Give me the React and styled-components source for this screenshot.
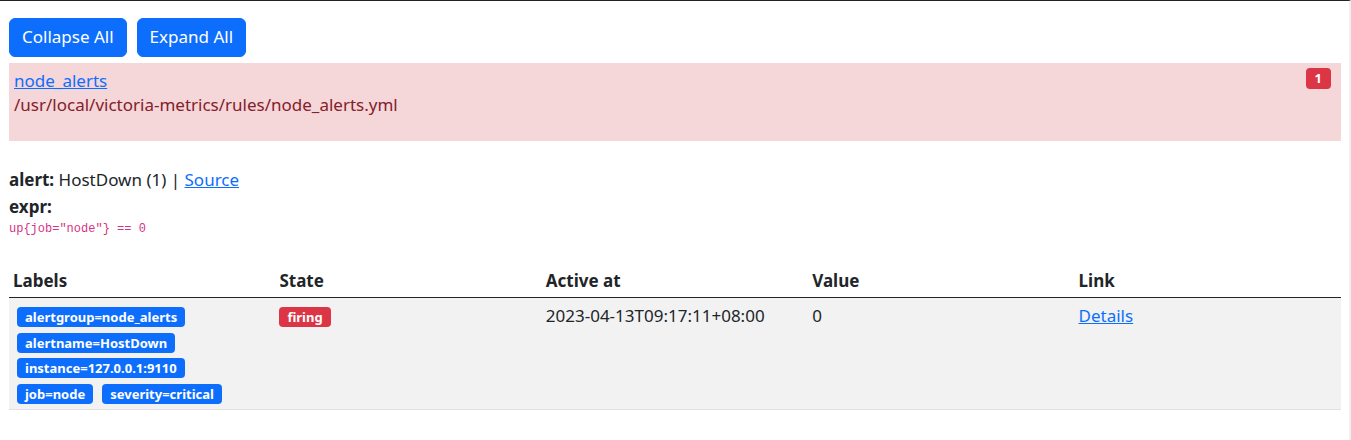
import React from "react";
import styled, { createGlobalStyle } from "styled-components";

const GlobalStyle = createGlobalStyle`
  body {
    margin: 0;
    font-family: "Noto Sans", "Open Sans", sans-serif;
    font-size: 17px;
    line-height: 24px;
    color: #212529;
    background: #fff;
  }
`;

const Page = styled.div`
  border-top: 1px solid #212529;
  border-right: 2px solid #f0f0f0;
  padding: 17px 8px 30px 9px;
  min-height: 392px;
`;

const Toolbar = styled.div`
  display: flex;
  gap: 10px;
  margin-bottom: 6px;
`;

const Button = styled.button`
  font: inherit;
  color: #fff;
  background: #0d6efd;
  border: 1px solid #0d6efd;
  border-radius: 6px;
  padding: 6px 12px 7px;
  cursor: pointer;
`;

const GroupBox = styled.div`
  display: flex;
  justify-content: space-between;
  align-items: flex-start;
  background: #f5d6d9;
  color: #842029;
  padding: 6px 10px 24px 5px;
`;

const Link = styled.a`
  color: #0d6efd;
  text-decoration: underline;
  cursor: pointer;
`;

const Count = styled.span`
  display: inline-block;
  margin-top: -1px;
  background: #dc3545;
  color: #fff;
  font-size: 13px;
  font-weight: 700;
  line-height: 1;
  padding: 4px 9px;
  border-radius: 4px;
`;

const Rule = styled.div`
  margin-top: 25px;
`;

const Line = styled.div`
  line-height: 27px;
`;

const Code = styled.code`
  display: block;
  font-family: "Liberation Mono", monospace;
  font-size: 12px;
  line-height: 18px;
  color: #d63384;
`;

const Table = styled.table`
  width: 1332px;
  margin-top: 26px;
  border-collapse: collapse;
  table-layout: fixed;
`;

const Th = styled.th`
  text-align: left;
  font-weight: 700;
  padding: 5px 4px 4px;
  border-bottom: 1px solid #212529;
`;

const Td = styled.td`
  vertical-align: top;
  padding: 6px 4px 5px;
  background: #f2f2f2;
  border-bottom: 1px solid #dee2e6;
`;

const Badges = styled.div`
  display: flex;
  flex-wrap: wrap;
  gap: 5.5px 9px;
  padding: 3px 0 0 ${(p) => (p.$inset ? "4px" : "0")};
  max-width: 250px;
`;

const Badge = styled.span`
  display: inline-block;
  background: ${(p) => (p.$danger ? "#dc3545" : "#0d6efd")};
  color: #fff;
  font-size: 13px;
  font-weight: 700;
  line-height: 1;
  padding: 4px 8px 3px;
  border-radius: 4px;
  white-space: nowrap;
`;

const labels = [
  "alertgroup=node_alerts",
  "alertname=HostDown",
  "instance=127.0.0.1:9110",
  "job=node",
  "severity=critical",
];

export default function App() {
  return (
    <>
      <GlobalStyle />
      <Page>
        <Toolbar>
          <Button>Collapse All</Button>
          <Button>Expand All</Button>
        </Toolbar>
        <GroupBox>
          <div>
            <Link>node_alerts</Link>
            <div>/usr/local/victoria-metrics/rules/node_alerts.yml</div>
          </div>
          <Count>1</Count>
        </GroupBox>
        <Rule>
          <Line>
            <b>alert:</b> HostDown (1) | <Link>Source</Link>
          </Line>
          <Line>
            <b>expr:</b>
          </Line>
          <Code>up{'{'}job="node"{'}'} == 0</Code>
        </Rule>
        <Table>
          <thead>
            <tr>
              <Th>Labels</Th>
              <Th>State</Th>
              <Th>Active at</Th>
              <Th>Value</Th>
              <Th>Link</Th>
            </tr>
          </thead>
          <tbody>
            <tr>
              <Td>
                <Badges $inset>
                  {labels.map((l) => (
                    <Badge key={l}>{l}</Badge>
                  ))}
                </Badges>
              </Td>
              <Td>
                <Badges>
                  <Badge $danger>firing</Badge>
                </Badges>
              </Td>
              <Td>2023-04-13T09:17:11+08:00</Td>
              <Td>0</Td>
              <Td>
                <Link>Details</Link>
              </Td>
            </tr>
          </tbody>
        </Table>
      </Page>
    </>
  );
}
